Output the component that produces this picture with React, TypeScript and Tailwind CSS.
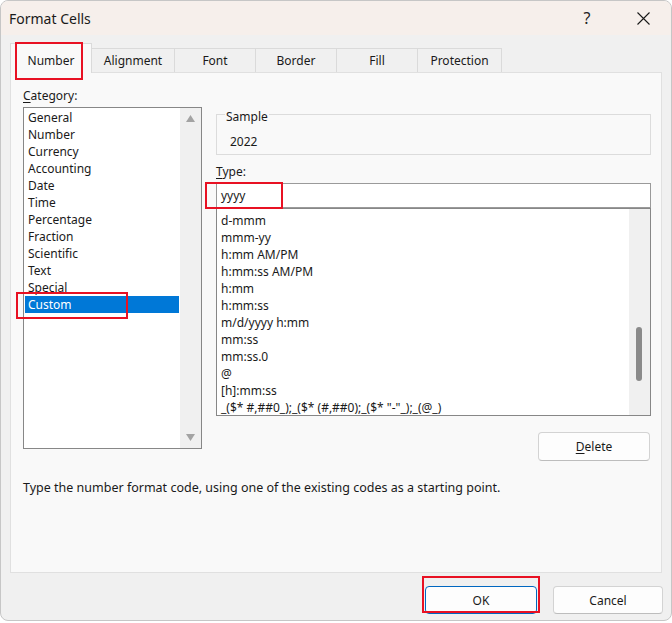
import React from "react";

const categories = [
  "General",
  "Number",
  "Currency",
  "Accounting",
  "Date",
  "Time",
  "Percentage",
  "Fraction",
  "Scientific",
  "Text",
  "Special",
  "Custom",
];

const types = [
  "d-mmm",
  "mmm-yy",
  "h:mm AM/PM",
  "h:mm:ss AM/PM",
  "h:mm",
  "h:mm:ss",
  "m/d/yyyy h:mm",
  "mm:ss",
  "mm:ss.0",
  "@",
  "[h]:mm:ss",
  '_($* #,##0_);_($* (#,##0);_($* "-"_);_(@_)',
];

const tabs = [
  { label: "Alignment", w: "w-[84px]" },
  { label: "Font", w: "w-[82px]" },
  { label: "Border", w: "w-[82px]" },
  { label: "Fill", w: "w-[82px]" },
  { label: "Protection", w: "w-[85px]" },
];

function Triangle({ down }: { down?: boolean }) {
  return (
    <svg width="9" height="7" viewBox="0 0 9 7" className="block">
      <path d={down ? "M0 0 H9 L4.5 7 Z" : "M0 7 H9 L4.5 0 Z"} fill="#a3a3a3" />
    </svg>
  );
}

export default function App() {
  return (
    <div className="h-[623px] w-[672px] overflow-hidden bg-white font-['Noto_Sans',sans-serif] text-[12px] leading-[17px] text-[#1a1a1a]">
      <div className="relative flex h-[621px] w-[672px] flex-col overflow-hidden rounded-[8px] border border-[#c6c6c6] bg-[#f0f0f0]">
        {/* title bar */}
        <div className="flex h-[34px] shrink-0 items-center bg-[#f6efeb]">
          <span className="ml-[8px] text-[14px]">Format Cells</span>
          <div className="ml-auto mr-[10px] flex h-full w-[46px] items-center justify-center text-[16px] text-[#222]">?</div>
          <div className="mr-[5px] flex h-full w-[46px] items-center justify-center">
            <svg width="13" height="13" viewBox="0 0 13 13">
              <path d="M0.5 0.5 L12.5 12.5 M12.5 0.5 L0.5 12.5" stroke="#1a1a1a" strokeWidth="1.1" />
            </svg>
          </div>
        </div>

        <div className="flex flex-col px-[9px]">
          {/* tabs */}
          <div className="flex h-[37px] items-end">
            <div className="relative z-10 -mb-px flex h-[30px] w-[82px] items-center justify-center border border-b-0 border-[#dadada] bg-[#f9f9f9] pt-[3px]">
              Number
            </div>
            {tabs.map((t) => (
              <div
                key={t.label}
                className={`-ml-px flex h-[24px] items-center justify-center border border-b-0 border-[#dadada] bg-[#f0f0f0] ${t.w}`}
              >
                {t.label}
              </div>
            ))}
          </div>

          {/* panel */}
          <div className="flex h-[501px] w-[652px] flex-col border border-[#e0e0e0] bg-[#f9f9f9]">
            <div className="flex items-start pl-[12px] pt-[14px]">
              {/* category */}
              <div className="flex w-[179px] flex-col">
                <div>
                  <span className="underline underline-offset-2">C</span>ategory:
                </div>
                <div className="mt-[3px] flex h-[342px] border border-[#878787] bg-white">
                  <div className="flex flex-1 flex-col px-px pt-px">
                    {categories.map((c) => (
                      <div
                        key={c}
                        className={`h-[17px] pl-[3px] ${c === "Custom" ? "bg-[#0078d7] text-white" : ""}`}
                      >
                        {c}
                      </div>
                    ))}
                  </div>
                  <div className="flex w-[21px] flex-col items-center justify-between bg-[#f0f0f0] py-[7px]">
                    <Triangle />
                    <Triangle down />
                  </div>
                </div>
              </div>

              {/* right side */}
              <div className="ml-[14px] flex w-[435px] flex-col">
                <div className="relative mt-[27px] h-[41px] border border-[#dcdcdc]">
                  <span className="absolute -top-[7px] left-[8px] bg-[#f9f9f9] px-px">Sample</span>
                  <div className="pl-[13px] pt-[18px]">2022</div>
                </div>
                <div className="mt-[8px]">
                  <span className="underline underline-offset-2">T</span>ype:
                </div>
                <div className="mt-[3px] flex h-[25px] items-center border border-[#9a9a9a] bg-white pl-[4px]">
                  yyyy
                </div>
                <div className="flex h-[208px] border border-[#878787] bg-white">
                  <div className="flex flex-1 flex-col overflow-hidden pl-[4px] pt-[3px]">
                    {types.map((t) => (
                      <div key={t} className="h-[17px] shrink-0 whitespace-pre">
                        {t}
                      </div>
                    ))}
                  </div>
                  <div className="w-[21px] bg-[#f0f0f0] pl-[7px] pt-[118px]">
                    <div className="h-[54px] w-[6px] rounded-full bg-[#8a8a8a]" />
                  </div>
                </div>
                <button className="mr-px mt-[16px] flex h-[29px] w-[112px] items-center justify-center self-end rounded-[4px] border border-[#d3d3d3] border-b-[#bdbdbd] bg-[#fdfdfd]">
                  <span>
                    <span className="underline underline-offset-2">D</span>elete
                  </span>
                </button>
              </div>
            </div>
            <div className="mt-[18px] pl-[12px] text-[12.5px]">
              Type the number format code, using one of the existing codes as a starting point.
            </div>
          </div>

          {/* buttons */}
          <div className="-mr-px flex justify-end gap-[16px] pt-[13px]">
            <button className="flex h-[28px] w-[112px] items-center justify-center rounded-[4px] border border-[#0067c0] bg-[#fdfdfd]">
              OK
            </button>
            <button className="flex h-[28px] w-[110px] items-center justify-center rounded-[4px] border border-[#d3d3d3] border-b-[#bdbdbd] bg-[#fdfdfd]">
              Cancel
            </button>
          </div>
        </div>

        {/* red annotation boxes */}
        <div className="absolute left-[14px] top-[41px] z-20 h-[38px] w-[68px] border-2 border-[#e81123]" />
        <div className="absolute left-[15px] top-[291px] z-20 h-[27px] w-[112px] border-2 border-[#e81123]" />
        <div className="absolute left-[204px] top-[181px] z-20 h-[27px] w-[78px] border-2 border-[#e81123]" />
        <div className="absolute left-[421px] top-[575px] z-20 h-[37px] w-[118px] border-2 border-[#e81123]" />
      </div>
    </div>
  );
}
